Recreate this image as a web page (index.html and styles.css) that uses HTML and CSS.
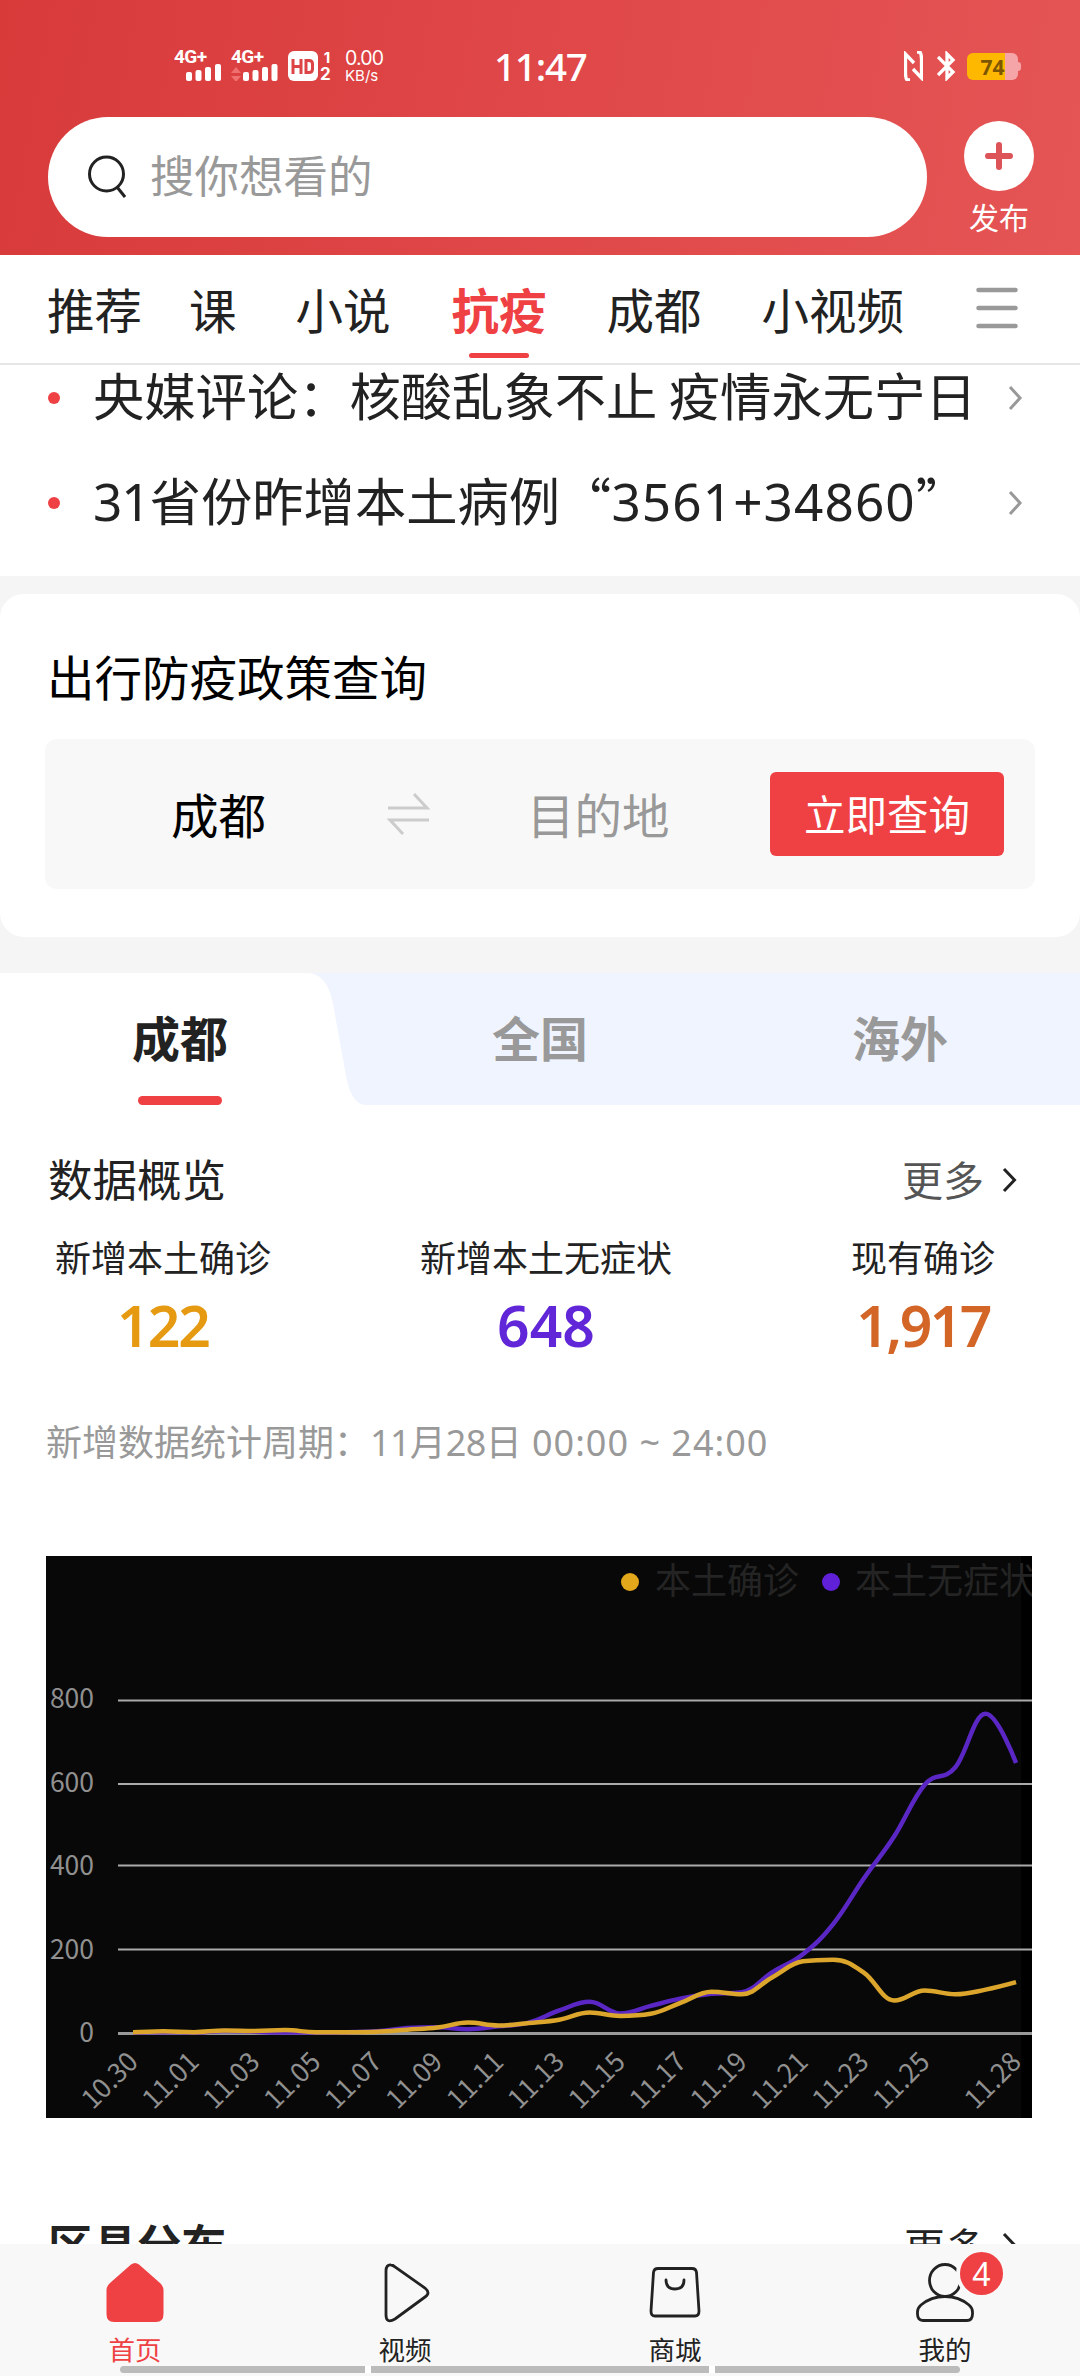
FILE: index.html
```html
<!DOCTYPE html>
<html lang="zh-CN">
<head>
<meta charset="utf-8">
<title>抗疫</title>
<link rel="stylesheet" href="styles.css">
</head>
<body>
<div class="app">
  <header class="top">
    <div class="status">
      <div class="signal"><span>4G+</span>
        <svg width="36" height="17" viewBox="0 0 36 17" fill="#fff"><rect x="0" y="8" width="6" height="9" rx="2"/><rect x="9.500" y="6" width="6" height="11" rx="2"/><rect x="19" y="3" width="6" height="14" rx="2"/><rect x="29" y="0" width="6" height="17" rx="2"/></svg>
      </div>
      <div class="signal second"><span>4G+</span>
        <svg width="47" height="17" viewBox="-11 0 47 17" fill="#fff"><path d="M-11 9l5-6 5 6zM-11 12h10l-5 6z" fill="#f07070"/><rect x="1" y="8" width="6" height="9" rx="2"/><rect x="10.500" y="6" width="6" height="11" rx="2"/><rect x="20" y="3" width="6" height="14" rx="2"/><rect x="29.500" y="0" width="6" height="17" rx="2"/></svg>
      </div>
      <svg class="hd" width="30" height="30" viewBox="0 0 30 30"><rect width="30" height="30" rx="6" fill="#fff"/><path d="M5 8v15M13 8v15M5 15.500h8M18 9.500h3q3.500 0 3.500 3.500v5q0 3.500-3.500 3.500h-3z" fill="none" stroke="#dd4446" stroke-width="3"/></svg>
      <div class="sims"><span>1</span><span>2</span></div>
      <div class="speed"><span>0.00</span><small>KB/s</small></div>
      <div class="clock">11:47</div>
      <svg class="nfc" width="19" height="30" viewBox="0 0 19 30" fill="none" stroke="#fff" stroke-width="3.300"><path d="M6 29H3Q1.500 27 1.500 22V3L10 12M13 1h3q1.500 2 1.500 7v19L9 18"/></svg>
      <svg class="bt" width="19" height="30" viewBox="0 0 19 30" fill="none" stroke="#fff" stroke-width="3.300"><path d="M1 6l15 15-6 6V3l6 6L1 24"/></svg>
      <div class="battery"><span>74</span></div>
    </div>
    <div class="search-row">
      <div class="search">
        <svg width="38" height="44" viewBox="0 0 38 44" fill="none" stroke="#222" stroke-width="3"><ellipse cx="18.500" cy="19" rx="17" ry="17"/><path d="M29 32l8 10"/></svg>
        <span>搜你想看的</span>
      </div>
      <div class="publish">
        <svg width="70" height="70" viewBox="0 0 70 70"><circle cx="35" cy="35" r="35" fill="#fff"/><path d="M35 24v22M24 35h22" stroke="#dc5358" stroke-width="6" stroke-linecap="round"/></svg>
        <span>发布</span>
      </div>
    </div>
  </header>

  <nav class="channels">
    <span>推荐</span><span class="c2">课</span><span class="c3">小说</span><span class="active">抗疫</span><span>成都</span><span class="last">小视频</span>
    <svg width="42" height="42" viewBox="0 0 42 42" stroke="#999" stroke-width="4.500" stroke-linecap="round"><path d="M2.500 3h37M2.500 21h37M2.500 39h37"/></svg>
  </nav>

  <main class="content">
    <section class="news">
      <div class="news-row"><i></i><p>央媒评论：核酸乱象不止<span class="thin"> </span>疫情永无宁日</p><svg width="15" height="26" viewBox="0 0 15 26"><path d="M2 2l10 11L2 24"/></svg></div>
      <div class="news-row"><i></i><p><span class="d31">31</span>省份昨增本土病例“<span class="dnum">3561+34860</span>”</p><svg width="15" height="26" viewBox="0 0 15 26"><path d="M2 2l10 11L2 24"/></svg></div>
    </section>

    <section class="policy">
      <h2>出行防疫政策查询</h2>
      <div class="query">
        <span class="from">成都</span>
        <svg width="43" height="42" viewBox="0 0 43 42" fill="none" stroke="#ccc" stroke-width="3"><path d="M1 15h39L27 1M42 27H3l13 14"/></svg>
        <span class="to">目的地</span>
        <button>立即查询</button>
      </div>
    </section>

    <section class="data">
      <div class="regions">
        <svg class="tab-bg" width="1080" height="132" viewBox="0 0 1080 132"><path d="M310 0H1080V132H366Q350 132 345 97L333 31Q328 3 310 0Z" fill="#f0f4ff"/></svg>
        <span class="on">成都</span><span>全国</span><span>海外</span>
      </div>
      <div class="heading"><h3>数据概览</h3><span class="more">更多</span><svg width="16" height="26" viewBox="0 0 16 26"><path d="M2 2l10.500 11L2 24"/></svg></div>
      <div class="stats">
        <div class="stat s1"><span>新增本土确诊</span><b>122</b></div>
        <div class="stat s2"><span>新增本土无症状</span><b>648</b></div>
        <div class="stat s3"><span>现有确诊</span><b>1,917</b></div>
      </div>
      <p class="period">新增数据统计周期：<span>11</span>月<span>28</span>日<span class="time"> 00:00 ~ 24:00</span></p>
      <svg class="chart" id="chart" width="986" height="562" viewBox="46 1556 986 562"></svg>
      <div class="heading next"><h3>区县分布</h3><span class="more">更多</span><svg width="16" height="26" viewBox="0 0 16 26"><path d="M2 2l10.500 11L2 24"/></svg></div>
    </section>
  </main>

  <footer class="tabbar">
    <div class="tab home"><svg width="58" height="60" viewBox="0 0 58 60"><path d="M25 1.500Q29-1.500 33 1.500L54 20Q57.500 23 57.500 27V51Q57.500 59 50 59H8Q.500 59 .500 51V27Q.500 23 4 20Z" fill="#ef4143"/></svg><span>首页</span></div>
    <div class="tab"><svg width="58" height="60" viewBox="0 0 58 60"><path d="M10 8Q10 1.500 15 2Q17 2 19 4L49 25Q55 30 49 34L19 56Q10 61 10 52Z"/></svg><span>视频</span></div>
    <div class="tab"><svg width="58" height="60" viewBox="0 0 58 60"><path d="M12 5.500H46Q50 5.500 50.500 9.500L53 48Q53 53 49 53H9Q5 53 5 48L7.500 9.500Q8 5.500 12 5.500ZM20 17Q20 26 29 26Q38 26 38 17" stroke-linecap="round"/></svg><span>商城</span></div>
    <div class="tab"><svg width="58" height="60" viewBox="0 0 58 60"><ellipse cx="29" cy="17.500" rx="15.500" ry="16"/><path d="M29 33.500Q43 33.500 53 42Q56.500 45 56.500 49V51Q56.500 57.500 51 57.500H7Q1.500 57.500 1.500 51V49Q1.500 45 5 42Q15 33.500 29 33.500Z"/></svg><span>我的</span><em>4</em></div>
    <div class="gesture"><i></i><i></i><i></i></div>
  </footer>
</div>
<script src="chart.js"></script>
</body>
</html>
```
FILE: styles.css
```css
* { box-sizing: border-box; margin: 0; padding: 0; }
body { width: 1080px; height: 2376px; overflow: hidden; background: #fff; color: #222; font-family: "Noto Sans CJK SC", sans-serif; line-height: 1; }
.app { width: 1080px; height: 2376px; display: flex; flex-direction: column; }
svg { display: block; flex: none; }
span, p, h2, h3 { white-space: nowrap; }

.top { height: 255px; flex: none; background: linear-gradient(100deg, #d83a3a 0%, #df4647 45%, #e55555 100%); color: #fff; }
.status { height: 117px; padding: 48px 0 0 174px; display: flex; align-items: flex-start; }
.status > * { flex: none; }
.signal { width: 57px; height: 34px; display: flex; flex-direction: column; }
.signal span { font: 700 19px/17px Roboto, sans-serif; letter-spacing: -.6px; height: 16px; }
.signal svg { margin-left: 12px; }
.signal.second svg { margin-left: 0; }
.hd { margin-top: 3px; }
.sims { width: 14px; margin: 1px 0 0 2px; display: flex; flex-direction: column; font: 700 17px/17px Inter, sans-serif; }
.sims span:first-child { text-align: center; font-size: 15px; }
.speed { width: 58px; margin: 1px 0 0 11px; display: flex; flex-direction: column; font-family: Inter, sans-serif; }
.speed span { font-size: 19.500px; line-height: 19px; letter-spacing: -.8px; }
.speed small { font-size: 15px; line-height: 15px; }
.clock { margin-left: 91px; width: 100px; font: 500 38.500px/36px "Noto Sans", sans-serif; white-space: nowrap; letter-spacing: -1.200px; }
.nfc { margin: 3px 14px 0 310px; }
.bt { margin-top: 3px; }
.battery { position: relative; width: 51px; height: 27px; margin: 5px 0 0 11px; border-radius: 6px; background: linear-gradient(90deg, #ffb800 75%, #f5a5a8 75%); color: #7c5600; }
.battery::after { content: ""; position: absolute; right: -3px; top: 9px; width: 3px; height: 9px; border-radius: 0 3px 3px 0; background: #f5a5a8; }
.battery span { display: block; font: 700 21px/28px "Noto Sans", sans-serif; text-align: center; }
.search-row { display: flex; padding-left: 48px; }
.search { width: 879px; height: 120px; border-radius: 60px; background: #fff; display: flex; align-items: center; padding-left: 40px; }
.search span { margin-left: 24px; padding-bottom: 5px; font-size: 44.500px; color: #999; }
.publish { margin: 4px 0 0 37px; width: 70px; display: flex; flex-direction: column; align-items: center; }
.publish span { margin-top: 10px; font-size: 30px; line-height: 30px; }

.channels { height: 110px; flex: none; display: flex; border-bottom: 2px solid #e6e6e6; padding: 30px 0 0 47px; font-size: 47.500px; }
.channels span { margin-right: 60px; height: 73px; line-height: 48px; }
.channels span:first-child { margin-right: 47px; }
.channels .c2 { margin-right: 59px; }
.channels .c3 { margin-right: 61px; }
.channels .active { color: #ef4143; font-weight: 700; display: flex; flex-direction: column; align-items: center; }
.channels .active::after { content: ""; width: 60px; height: 7px; border-radius: 4px; margin-top: 20px; background: #ef4143; }
.channels svg { margin: 2px 0 0 12px; }

.content { height: 1879px; flex: none; overflow: hidden; background: #f5f5f5; }
.news { height: 211px; background: #fff; padding: 7px 57px 0 48px; }
.news-row { height: 52px; margin-bottom: 53px; display: flex; align-items: center; }
.news-row i { width: 12px; height: 12px; border-radius: 50%; background: #ef4143; }
.news-row p { flex: 1; margin-left: 33px; height: 61px; font-size: 51.300px; line-height: 52px; }
.thin { letter-spacing: 0; }
.d31, .dnum { font-family: "Noto Sans", sans-serif; line-height: 40px; }
.d31 { letter-spacing: -1px; }
.dnum { letter-spacing: 1.100px; }
.news svg, .heading svg { fill: none; stroke: #999; stroke-width: 3; }

.policy { height: 343px; margin-top: 18px; border-radius: 24px; background: #fff; padding: 57px 45px 0; }
.policy h2 { padding-left: 2px; font-size: 47.500px; font-weight: 400; line-height: 50px; color: #000; }
.query { margin-top: 38px; height: 150px; border-radius: 12px; background: #f8f8f8; display: flex; align-items: center; padding: 0 30px 0 126px; font-size: 47.500px; }
.query .from { color: #000; width: 216px; }
.query .to { margin-left: 97px; width: 243px; color: #999; }
.query button { width: 234px; height: 84px; border: 0; border-radius: 6px; background: #ef4143; color: #fff; font: 400 41.500px/1 "Noto Sans CJK SC", sans-serif; }

.data { margin-top: 36px; height: 1271px; background: #fff; }
.regions { position: relative; height: 132px; display: grid; grid-template-columns: repeat(3, 1fr); color: #999; font-size: 48px; font-weight: 700; }
.regions span { position: relative; height: 132px; text-align: center; line-height: 127px; }
.tab-bg { position: absolute; left: 0; top: 0; }
.regions .on { color: #222; }
.regions .on::after { content: ""; position: absolute; left: 138px; bottom: 0; width: 84px; height: 9px; border-radius: 5px; background: #ef4143; }
.heading { height: 50px; margin-top: 50px; padding: 0 62px 0 48px; display: flex; align-items: center; }
.heading h3 { flex: 1; font-size: 44.500px; font-weight: 400; padding-bottom: 4px; }
.heading .more { font-size: 41px; color: #555; margin-right: 18px; padding-bottom: 4px; }
.heading svg { stroke: #222; }
.stats { height: 146px; margin-top: 31px; display: flex; }
.stat { display: flex; flex-direction: column; align-items: center; font-size: 36px; line-height: 40px; }
.s1 { margin-left: 55px; }
.s2 { margin-left: 149px; }
.s3 { margin-left: 179px; }
.stat b { margin-top: 19px; font: 600 57px/60px "Noto Sans", sans-serif; letter-spacing: 0; }
.s1 b { color: #e59a12; letter-spacing: -2px; }
.s2 b { color: #6026d8; }
.s3 b { color: #d36527; letter-spacing: -2.500px; }
.period { height: 40px; margin-top: 39px; padding-left: 46px; font-size: 36px; line-height: 38px; color: #999; }
.period span { font-family: "Noto Sans", sans-serif; line-height: 30px; white-space: pre; letter-spacing: -.700px; }
.period .time { letter-spacing: 1px; }
.chart { margin: 95px 0 0 46px; font-family: "Noto Sans CJK SC", sans-serif; }
.heading.next { margin-top: 102px; }
.next h3 { font-weight: 700; }
.next .more { color: #222; margin-right: 16px; padding-bottom: 0; }

.tabbar { position: relative; height: 132px; flex: none; background: #f8f8f8; display: grid; grid-template-columns: repeat(4, 1fr); }
.tab { position: relative; padding-top: 19px; display: flex; flex-direction: column; align-items: center; font-size: 26.500px; }
.tab svg { fill: none; stroke: #222; stroke-width: 2.800; }
.tab span { margin-top: 12px; line-height: 28px; }
.home svg { stroke: none; }
.home span { color: #ef4143; }
.tab em { position: absolute; left: 146px; top: 4px; width: 51px; height: 51px; border: 4px solid #f8f8f8; border-radius: 50%; background: #ef4143; color: #fff; font: 400 32px/43px "Noto Sans", sans-serif; text-align: center; }
.gesture { position: absolute; left: 120px; top: 122px; width: 840px; height: 7px; border-radius: 4px; overflow: hidden; display: flex; gap: 6px; background: #fff; }
.gesture i { flex: 245; background: #bbb; }
.gesture i:nth-child(2) { flex: 338; }
```
FILE: chart.js
```js
const confirmed = [2,4,2,6,5,7,2,2,3,8,13,25,18,24,32,49,41,46,73,99,93,134,172,176,145,78,102,93,104,122];
const silent = [1,2,1,5,3,1,1,2,4,12,14,9,16,25,54,75,47,65,83,94,98,146,189,262,371,472,596,637,766,648];
const x = i => 133 + i * 30.45;
const y = v => 2033 - v * 0.4167;
const clamp = (v, a, b) => Math.max(Math.min(a, b), Math.min(Math.max(a, b), v));

// Smooth line whose control points never pass the neighbouring values.
function smooth(values) {
  const n = values.length;
  const ctl = values.map((v, i) => {
    const p = y(v);
    if (i === 0 || i === n - 1) return [p, p];
    const a = y(values[i - 1]), b = y(values[i + 1]);
    let d = (b - a) * 0.2;
    d = clamp(p + d, p, b) - p;
    d = p - clamp(p - d, p, a);
    return [p - d, p + d];
  });
  let path = `M${x(0)} ${y(values[0])}`;
  for (let i = 1; i < n; i++) {
    const end = i === n - 1 ? 0 : 12;
    path += `C${x(i - 1) + 12} ${ctl[i - 1][1]} ${x(i) - end} ${ctl[i][0]} ${x(i)} ${y(values[i])}`;
  }
  return path;
}

let out = '<rect x="46" y="1556" width="986" height="562" fill="#080808"/><rect x="1021" y="1556" width="11" height="562" fill="#000"/>';
[[800, 1700.5], [600, 1784], [400, 1865.5], [200, 1949.5], [0, 2033.5]].forEach(([v, gy]) => {
  out += `<path d="M118 ${gy}H1032" stroke="${v ? '#aaa' : '#999'}" stroke-width="${v ? 2 : 3}"/>`;
  out += `<text x="94" y="${2042 - v * 0.4175}" text-anchor="end" font-size="26.5" fill="#909090">${v}</text>`;
});
['10.30','11.01','11.03','11.05','11.07','11.09','11.11','11.13','11.15','11.17','11.19','11.21','11.23','11.25','11.28'].forEach((t, k) => {
  const i = k === 14 ? 29 : k * 2;
  out += `<text transform="translate(${x(i)} 2057) rotate(-45)" y="9.5" text-anchor="end" font-size="26.5" fill="#909090">${t}</text>`;
});
out += `<path d="${smooth(silent)}" fill="none" stroke="#5a27c4" stroke-width="4.5"/>`;
out += `<path d="${smooth(confirmed)}" fill="none" stroke="#dca62c" stroke-width="4.5"/>`;
out += '<circle cx="630" cy="1582" r="9" fill="#e2a71a"/><circle cx="831" cy="1582" r="9" fill="#6020d8"/>';
out += '<text x="655" y="1594" font-size="36" fill="#242424">本土确诊</text><text x="855" y="1594" font-size="36" fill="#242424">本土无症状</text>';
document.getElementById('chart').innerHTML = out;
```
